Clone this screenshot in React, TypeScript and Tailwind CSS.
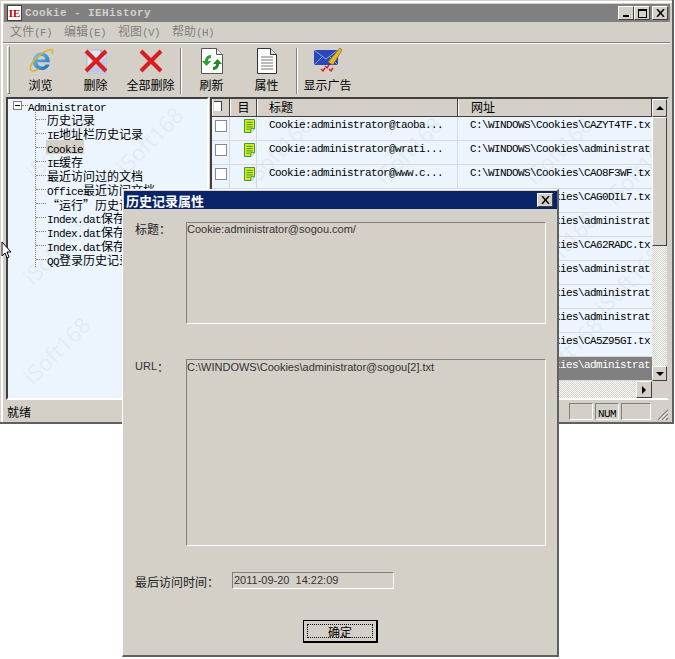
import React from "react";

const CJK = "[font-family:'Noto_Sans_CJK_SC',sans-serif] text-[12px]";
const LAT = "[font-family:'Liberation_Mono',monospace] text-[11px] tracking-[-0.6px]";

function T({ s, className = "" }: { s: string; className?: string }) {
  const parts = s.match(/[\x20-\x7e]+|[^\x20-\x7e]+/g) || [];
  return (
    <span className={"whitespace-pre leading-none " + className}>
      {parts.map((p, i) => (
        <span key={i} className={/^[\x20-\x7e]/.test(p) ? LAT : CJK}>
          {p}
        </span>
      ))}
    </span>
  );
}

const raised =
  "border border-t-white border-l-white border-r-[#404040] border-b-[#404040] bg-[#d4d0c8]";
const sunken = "border border-t-[#808080] border-l-[#808080] border-r-white border-b-white";

function IEIcon() {
  return (
    <svg width="28" height="28" viewBox="0 0 28 28">
      <defs>
        <linearGradient id="ieg" x1="0" y1="0" x2="1" y2="1">
          <stop offset="0" stopColor="#7cc8f0" />
          <stop offset="1" stopColor="#1569b5" />
        </linearGradient>
      </defs>
      <path
        d="M14 5.5c5.5 0 9 4 8.8 9.8H10.4c.2 2.6 2 4.2 4.4 4.2 1.8 0 3-.8 3.8-2.1h4c-1.2 3.5-4.2 5.6-8 5.6-5.2 0-8.8-3.6-8.8-8.7 0-5 3.6-8.8 8.2-8.8zm-3.5 7h7.9c-.2-2.1-1.8-3.6-3.9-3.6s-3.7 1.5-4 3.6z"
        fill="url(#ieg)"
      />
      <path d="M3.5 22.5C2 18 11 6 23.5 2.6 26 2.2 26 5 25 7" fill="none" stroke="#e0b030" strokeWidth="1.6" />
      <path d="M3.5 22.5c.8 2.5 5 1.6 8.5-.6" fill="none" stroke="#e0b030" strokeWidth="1.6" />
    </svg>
  );
}

function RedX() {
  return (
    <g stroke="#d81e1e" strokeWidth="4" strokeLinecap="butt">
      <path d="M3 4 23 24" />
      <path d="M23 4 3 24" />
    </g>
  );
}

function DeleteIcon() {
  return (
    <svg width="26" height="28" viewBox="0 0 26 28">
      <path d="M4 3h14l5 4v19H4z" fill="#dfe6f4" stroke="#a8bcdc" />
      <path d="M18 3v4h5" fill="#b8c8e4" stroke="#8ba4cc" />
      <path d="M5 25h17V10z" fill="#b7cbe8" />
      <RedX />
    </svg>
  );
}

function DeleteAllIcon() {
  return (
    <svg width="26" height="28" viewBox="0 0 26 28">
      <RedX />
    </svg>
  );
}

function RefreshIcon() {
  return (
    <svg width="24" height="28" viewBox="0 0 24 28">
      <path d="M1.5 1.5h15l6 6v19h-21z" fill="#fff" stroke="#555" />
      <path d="M16.5 1.5v6h6" fill="#e8e8e8" stroke="#555" />
      <path d="M11 8C7 8 5 11 5 14H2l4.5 5L11 14H8c0-2 1-3 3-3z" fill="#2fa02f" />
      <path d="M13 23c4 0 6-3 6-6h3l-4.5-5L13 17h3c0 2-1 3-3 3z" fill="#1d8a25" />
    </svg>
  );
}

function PropsIcon() {
  return (
    <svg width="22" height="28" viewBox="0 0 22 28">
      <path d="M1.5 1.5h13l6 6v19h-19z" fill="#fff" stroke="#333" />
      <path d="M14.5 1.5v6h6" fill="#ddd" stroke="#333" />
      <path d="M5 10h12M5 13h12M5 16h12M5 19h12M5 22h12" stroke="#777" />
    </svg>
  );
}

function AdIcon() {
  return (
    <svg width="30" height="28" viewBox="0 0 30 28">
      <path d="M1 3h24v15H1z" fill="#2a48b8" />
      <path d="M1 3l12 9 12-9M1 18l9-9M25 18l-9-9" fill="none" stroke="#8fa6ea" />
      <path d="M15 15 27 1l2 2-9 15z" fill="#e6b820" stroke="#7a5b10" strokeWidth=".6" />
      <path d="M12 19l2 2 2-3M16 22l2 2 2-3M8 22l2 2 2-3" fill="none" stroke="#d82020" strokeWidth="1.4" />
    </svg>
  );
}

function DocIcon() {
  return (
    <svg width="11" height="14" viewBox="0 0 12 15">
      <path d="M.5.5h11v10l-4 4h-7z" fill="#e8f020" stroke="#178a2a" />
      <path d="M2.5 3.5h7M2.5 6h7M2.5 8.5h7M2.5 11h4" stroke="#178a2a" />
      <path d="M7.5 14.5v-4h4" fill="#fff" stroke="#178a2a" />
    </svg>
  );
}

function ToolBtn({ label, icon }: { label: string; icon: React.ReactNode }) {
  return (
    <div className="w-[55px] h-[50px] flex flex-col items-center">
      <div className="h-[30px] flex items-center justify-center">{icon}</div>
      <div className="text-black whitespace-nowrap leading-none">
        <T s={label} />
      </div>
    </div>
  );
}

function Sep() {
  return <div className="w-[2px] h-[46px] mx-[2px] mt-[2px] border-l border-l-[#808080] border-r border-r-white" />;
}

function Watermark({ cx, cy }: { cx: number; cy: number }) {
  return (
    <span
      className="absolute w-[100px] h-[30px] text-center leading-[30px] text-[22px] -rotate-45 text-[#e2ebf3] [font-family:'Open_Sans',sans-serif] whitespace-nowrap pointer-events-none"
      style={{ left: cx - 50, top: cy - 15 }}
    >
      iSoft168
    </span>
  );
}

const treeItems = [
  "历史记录",
  "IE地址栏历史记录",
  "Cookie",
  "IE缓存",
  "最近访问过的文档",
  "Office最近访问文档",
  "“运行”历史记录",
  "Index.dat保存的记录",
  "Index.dat保存的记录",
  "Index.dat保存的记录",
  "QQ登录历史记录",
];

const rows: [string, string][] = [
  ["Cookie:administrator@taoba...", "C:\\WINDOWS\\Cookies\\CAZYT4TF.tx"],
  ["Cookie:administrator@wrati...", "C:\\WINDOWS\\Cookies\\administrat"],
  ["Cookie:administrator@www.c...", "C:\\WINDOWS\\Cookies\\CAO8F3WF.tx"],
  ["Cookie:administrator@baidu...", "C:\\WINDOWS\\Cookies\\CAG0DIL7.tx"],
  ["Cookie:administrator@qq.co...", "C:\\WINDOWS\\Cookies\\administrat"],
  ["Cookie:administrator@163.c...", "C:\\WINDOWS\\Cookies\\CA62RADC.tx"],
  ["Cookie:administrator@sina...", "C:\\WINDOWS\\Cookies\\administrat"],
  ["Cookie:administrator@sohu...", "C:\\WINDOWS\\Cookies\\administrat"],
  ["Cookie:administrator@soso...", "C:\\WINDOWS\\Cookies\\administrat"],
  ["Cookie:administrator@ads...", "C:\\WINDOWS\\Cookies\\CA5Z95GI.tx"],
  ["Cookie:administrator@sogou...", "C:\\WINDOWS\\Cookies\\administrat"],
];

const arrowBtn = "flex items-center justify-center shrink-0 " + raised;
const dither =
  "bg-[repeating-conic-gradient(#ffffff_0_25%,#d4d0c8_0_50%)] bg-[length:2px_2px]";

const HeadCell = ({ w, children, className = "" }: { w: string; children?: React.ReactNode; className?: string }) => (
  <div className={"h-full flex items-center pb-[3px] border-r border-r-[#404040] border-l border-l-white " + w + " " + className}>
    {children}
  </div>
);

function MainWindow() {
  return (
    <div className="w-[674px] h-[424px] bg-[#d4d0c8] border-r-2 border-r-[#606060] border-b-2 border-b-[#606060] flex flex-col pt-[1px] pl-[1px]">
      <div className="flex-1 min-h-0 border-t-2 border-t-white border-l-2 border-l-white flex flex-col pt-[1px] pl-[1px] pr-[2px]">
        {/* title bar */}
        <div className="h-[18px] bg-[#808080] flex items-center shrink-0">
          <div className="w-[15px] h-[16px] mx-[3px] bg-white border border-[#404040] flex items-center justify-center">
            <span className="[font-family:'Liberation_Serif',serif] font-bold text-[11px] text-[#c00000] leading-none">IE</span>
          </div>
          <span className="[font-family:'Liberation_Mono',monospace] font-bold text-[11px] tracking-[0.4px] text-[#d4d0c8]">
            Cookie - IEHistory
          </span>
          <div className="ml-auto flex items-center pr-[2px]">
            <div className={"w-[16px] h-[14px] flex items-end justify-center pb-[2px] " + raised}>
              <div className="w-[6px] h-[2px] bg-black" />
            </div>
            <div className={"w-[16px] h-[14px] flex items-center justify-center " + raised}>
              <div className="w-[9px] h-[9px] border border-black border-t-2" />
            </div>
            <div className={"w-[16px] h-[14px] ml-[2px] flex items-center justify-center " + raised}>
              <svg width="9" height="8" viewBox="0 0 9 8">
                <path d="M1 0 8 8M8 0 1 8" stroke="#000" strokeWidth="1.5" />
              </svg>
            </div>
          </div>
        </div>
        {/* menu */}
        <div className="h-[20px] flex items-center pb-[4px] pl-[6px] text-[#808080] shrink-0">
          {["文件(F)", "编辑(E)", "视图(V)", "帮助(H)"].map((m) => (
            <div key={m} className="w-[54px] whitespace-nowrap leading-none">
              <T s={m} />
            </div>
          ))}
        </div>
        <div className="h-[2px] border-t border-t-[#808080] border-b border-b-white -ml-[1px] shrink-0" />
        {/* toolbar */}
        <div className="h-[53px] flex items-start pt-[2px] shrink-0">
          <div className="w-[3px] h-[48px] ml-[3px] mr-[3px] border border-t-white border-l-white border-r-[#808080] border-b-[#808080]" />
          <ToolBtn label="浏览" icon={<IEIcon />} />
          <ToolBtn label="删除" icon={<DeleteIcon />} />
          <ToolBtn label="全部删除" icon={<DeleteAllIcon />} />
          <Sep />
          <ToolBtn label="刷新" icon={<RefreshIcon />} />
          <ToolBtn label="属性" icon={<PropsIcon />} />
          <Sep />
          <ToolBtn label="显示广告" icon={<AdIcon />} />
        </div>
        {/* body */}
        <div className="h-[303px] flex pl-[2px] shrink-0">
          {/* tree */}
          <div className="relative w-[203px] h-full overflow-hidden bg-[#ecf5fe] border-2 border-t-[#404040] border-l-[#404040] border-r-white border-b-white">
            <Watermark cx={141} cy={41} />
            <Watermark cx={51} cy={46} />
            <Watermark cx={48} cy={151} />
            <Watermark cx={48} cy={251} />
            <div className="relative pl-[5px]">
              <div className="flex items-center h-[13px]">
                <div className="w-[9px] h-[9px] border border-[#808080] bg-white flex items-center justify-center">
                  <div className="w-[5px] h-[1px] bg-black" />
                </div>
                <div className="w-[6px] border-t border-dotted border-t-[#808080]" />
                <T s="Administrator" className="text-black" />
              </div>
              <div className="ml-[22px] border-l border-dotted border-l-[#808080] mb-[6px]">
                {treeItems.map((t, i) => (
                  <div key={i} className="h-[14.1px] flex items-center">
                    <div className="w-[10px] border-t border-dotted border-t-[#808080]" />
                    <div className={"h-[14px] px-[1px] flex items-center " + (t === "Cookie" ? "bg-[#d4d0c8]" : "")}>
                      <T s={t} className="text-black" />
                    </div>
                  </div>
                ))}
              </div>
            </div>
          </div>
          {/* list */}
          <div className="relative w-[459px] h-full ml-[1px] border-2 border-t-[#404040] border-l-[#404040] border-r-[#d4d0c8] border-b-white flex overflow-hidden">
            <div className="w-[440px] flex flex-col">
              <div className="h-[18px] flex shrink-0 bg-[#d4d0c8] border-b border-b-[#404040]">
                <HeadCell w="w-[18px]">
                  <div className="w-[8px] h-[10px] ml-[1px] bg-white border-t border-r border-[#404040]" />
                </HeadCell>
                <HeadCell w="w-[27px]" className="justify-center">
                  <T s="目" />
                </HeadCell>
                <HeadCell w="w-[201px]" className="pl-[11px]">
                  <T s="标题" />
                </HeadCell>
                <HeadCell w="w-[194px]" className="pl-[12px]">
                  <T s="网址" />
                </HeadCell>
              </div>
              <div className="relative flex-1 min-h-0 overflow-hidden bg-[#ecf5fe]">
                <Watermark cx={66} cy={33} />
                <Watermark cx={196} cy={33} />
                <Watermark cx={346} cy={33} />
                <Watermark cx={426} cy={53} />
                <Watermark cx={416} cy={163} />
                <Watermark cx={351} cy={128} />
                <Watermark cx={356} cy={233} />
                <div className="relative">
                  {rows.map((r, i) => {
                    const sel = i === rows.length - 1;
                    return (
                      <div key={i} className="h-[24px] flex border-b border-b-[#d8d8d8]">
                        <div className="w-[18px] flex items-start pt-[3px] justify-center border-r border-r-[#d8d8d8]">
                          <div className="w-[12px] h-[12px] bg-white border border-[#8a8a8a]" />
                        </div>
                        <div className="w-[27px] flex items-start pt-[2px] justify-end pr-[1px] border-r border-r-[#d8d8d8]">
                          <DocIcon />
                        </div>
                        <div className="w-[201px] flex items-start pl-[12px] border-r border-r-[#d8d8d8]">
                          <T s={r[0]} className="text-black -mt-[3px]" />
                        </div>
                        <div className={"w-[194px] flex items-start pl-[12px] " + (sel ? "bg-[#808080]" : "")}>
                          <T s={r[1]} className={"-mt-[3px] " + (sel ? "text-white" : "text-black")} />
                        </div>
                      </div>
                    );
                  })}
                </div>
              </div>
              <div className={"h-[17px] flex justify-end shrink-0 " + dither}>
                <div className={"w-[16px] h-[17px] " + arrowBtn}>
                  <div className="w-0 h-0 border-y-[4px] border-y-transparent border-l-[4px] border-l-black" />
                </div>
              </div>
            </div>
            <div className="w-[15px] flex flex-col">
              <div className={"h-[18px] " + arrowBtn}>
                <div className="w-0 h-0 border-x-[4px] border-x-transparent border-b-[4px] border-b-black" />
              </div>
              <div className={"h-[129px] shrink-0 " + raised} />
              <div className={"flex-1 " + dither} />
              <div className={"h-[15px] " + arrowBtn}>
                <div className="w-0 h-0 border-x-[4px] border-x-transparent border-t-[4px] border-t-black" />
              </div>
              <div className="h-[17px] bg-[#d4d0c8] shrink-0" />
            </div>
          </div>
        </div>
        {/* status */}
        <div className="flex-1 flex items-center relative pl-[3px]">
          <T s="就绪" className="text-black" />
          <div className="ml-auto flex items-center gap-[2px] pr-[19px]">
            <div className={"w-[24px] h-[17px] " + sunken} />
            <div className={"w-[24px] h-[17px] flex items-center justify-center " + sunken}>
              <T s="NUM" className="text-black" />
            </div>
            <div className={"w-[30px] h-[17px] " + sunken} />
          </div>
          <svg className="absolute right-[1px] bottom-[1px]" width="12" height="12" viewBox="0 0 12 12">
            <path d="M1 11 11 1M5 11l6-6M9 11l2-2" stroke="#808080" strokeWidth="1.3" />
            <path d="M2.5 11 11 2.5M6.5 11 11 6.5" stroke="#fff" />
          </svg>
        </div>
      </div>
    </div>
  );
}

function Dialog() {
  const dlgFont = "[font-family:'Liberation_Sans',sans-serif] text-[11px] text-[#333333] leading-none";
  return (
    <div className="absolute left-[122px] top-[189px] w-[437px] h-[468px] bg-[#d4d0c8] border-t border-t-white border-l border-l-white border-r-2 border-r-[#606060] border-b-2 border-b-[#606060] flex flex-col pt-[1px] pl-[1px]">
      <div className="h-[18px] bg-[#0a246a] flex items-center pl-[2px] pr-[4px] shrink-0">
        <span className="[font-family:'Noto_Sans_CJK_SC',sans-serif] text-[13px] font-bold text-white leading-none">
          历史记录属性
        </span>
        <div className={"ml-auto w-[16px] h-[14px] flex items-center justify-center " + raised}>
          <svg width="9" height="8" viewBox="0 0 9 8">
            <path d="M1 0 8 8M8 0 1 8" stroke="#000" strokeWidth="1.5" />
          </svg>
        </div>
      </div>
      <div className="flex-1 pl-[11px] pt-[13px]">
        <div className="flex">
          <div className="w-[51px] -mt-[2px] leading-none text-[#222222]">
            <T s="标题：" />
          </div>
          <div className={"w-[360px] h-[102px] pt-[1px] " + sunken + " " + dlgFont}>
            Cookie:administrator@sogou.com/
          </div>
        </div>
        <div className="flex mt-[35px]">
          <div className="w-[51px] text-[#222222] flex items-center h-[14px]">
            <span className={dlgFont}>URL</span>
            <T s="：" />
          </div>
          <div className={"w-[360px] h-[187px] pt-[2px] " + sunken + " " + dlgFont}>
            C:\WINDOWS\Cookies\administrator@sogou[2].txt
          </div>
        </div>
        <div className="flex items-center mt-[26px]">
          <div className="w-[97px] leading-none text-[#222222]">
            <T s="最后访问时间：" />
          </div>
          <div className={"w-[162px] h-[17px] flex items-center pl-[1px] " + sunken + " " + dlgFont}>
            2011-09-20&nbsp;&nbsp;14:22:09
          </div>
        </div>
        <div className="flex mt-[31px] pl-[168px]">
          <div className="w-[75px] h-[23px] border border-black bg-[#d4d0c8] border-r-2 border-b-2 flex items-center justify-center p-[3px]">
            <div className="w-full h-full border border-dotted border-black flex items-center justify-center">
              <T s="确定" className="text-black" />
            </div>
          </div>
        </div>
      </div>
    </div>
  );
}

export default function App() {
  return (
    <div className="relative w-[675px] h-[659px] bg-white overflow-hidden">
      <MainWindow />
      <Dialog />
      <svg className="absolute left-[1px] top-[241px]" width="11" height="19" viewBox="0 0 11 19">
        <path d="M1 1v14l3-3 2 5 2-1-2-5h4z" fill="#fff" stroke="#000" />
      </svg>
    </div>
  );
}
